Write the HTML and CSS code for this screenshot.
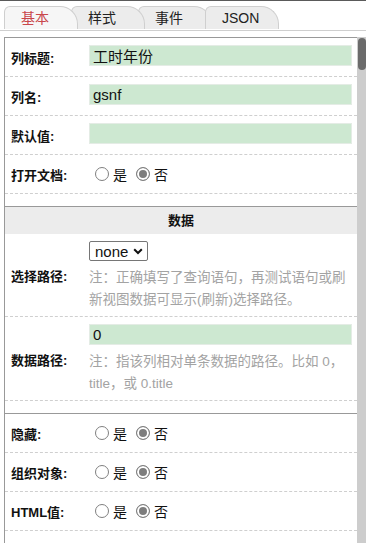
FILE: index.html
```html
<!DOCTYPE html>
<html>
  <head>
    <meta charset="UTF-8">
    <title>列属性</title>
    <link rel="stylesheet" href="styles.css">
  </head>
  <body>
    <div class="tabs">
      <div class="tab active">基本</div>
      <div class="tab">样式</div>
      <div class="tab">事件</div>
      <div class="tab">JSON</div>
    </div>
    <div class="main">
      <div class="panel">
        <div class="section">
          <div class="row">
            <label class="label">列标题:</label>
            <div class="value"><input class="text" type="text" value="工时年份"></div>
          </div>
          <div class="row">
            <label class="label">列名:</label>
            <div class="value"><input class="text" type="text" value="gsnf"></div>
          </div>
          <div class="row">
            <label class="label">默认值:</label>
            <div class="value"><input class="text" type="text" value=""></div>
          </div>
          <div class="row">
            <label class="label">打开文档:</label>
            <div class="value radios">
              <label><input type="radio" name="doc">是</label>
              <label><input type="radio" name="doc" checked>否</label>
            </div>
          </div>
        </div>

        <div class="group-head">数据</div>
        <div class="section">
          <div class="row tall">
            <label class="label">选择路径:</label>
            <div class="value">
              <div class="select">
                <span>none</span>
                <svg width="10" height="7" viewBox="0 0 10 7"><path d="M1.2 1.3 L5 5 L8.8 1.3" fill="none" stroke="#111" stroke-width="2"/></svg>
              </div>
              <p class="note">注：正确填写了查询语句，再测试语句或刷新视图数据可显示(刷新)选择路径。</p>
            </div>
          </div>
          <div class="row tall">
            <label class="label">数据路径:</label>
            <div class="value">
              <input class="text" type="text" value="0">
              <p class="note">注：指该列相对单条数据的路径。比如 0，title，或 0.title</p>
            </div>
          </div>
        </div>

        <div class="section ruled">
          <div class="row">
            <label class="label">隐藏:</label>
            <div class="value radios">
              <label><input type="radio" name="hide">是</label>
              <label><input type="radio" name="hide" checked>否</label>
            </div>
          </div>
          <div class="row">
            <label class="label">组织对象:</label>
            <div class="value radios">
              <label><input type="radio" name="obj">是</label>
              <label><input type="radio" name="obj" checked>否</label>
            </div>
          </div>
          <div class="row">
            <label class="label">HTML值:</label>
            <div class="value radios">
              <label><input type="radio" name="html">是</label>
              <label><input type="radio" name="html" checked>否</label>
            </div>
          </div>
        </div>

        <div class="footer">
          <svg width="15" height="15" viewBox="0 0 15 15"><circle cx="7.5" cy="7.5" r="6.5" fill="none" stroke="#666" stroke-width="1.2"/><path d="M7.5 4 V8" stroke="#666" stroke-width="1.4"/></svg>
          <span class="footer-title">显示脚本(S)</span>
          <svg width="10" height="10" viewBox="0 0 10 10"><rect x="0.5" y="0.5" width="9" height="9" fill="none" stroke="#666"/><rect x="0" y="0" width="10" height="3" fill="#666"/></svg>
        </div>
      </div>
      <div class="scrollbar"><div class="thumb"></div></div>
    </div>
  </body>
</html>
```

FILE: styles.css
```css
body {
  margin: 0;
  padding: 0;
  border-top: 1px solid #5a5a5a;
  background-color: #fff;
  font-family: "Liberation Sans", "Noto Sans CJK SC", sans-serif;
  color: #111;
  height: 542px;
  overflow: hidden;
}

.tabs {
  display: flex;
  padding: 5px 0 0 4px;
  border-bottom: 1px solid #cfcfcf;
  height: 24px;
}

.tab {
  position: relative;
  width: 74px;
  height: 23px;
  margin-right: -7px;
  box-sizing: border-box;
  border: 1px solid #cfcfcf;
  border-bottom: none;
  border-radius: 6px 18px 0 0;
  background-color: #ececec;
  font-size: 14px;
  line-height: 22px;
  padding-left: 16px;
  color: #222;
}

.tab.active {
  z-index: 2;
  background-color: #f6f6f6;
  color: #c9474b;
}

.tab:nth-child(2) { z-index: 1; }

.main {
  display: flex;
  margin-top: 6px;
  height: 506px;
  overflow: hidden;
}

.panel {
  flex: 1;
  margin-left: 4px;
  border-left: 1px solid #999;
  border-top: 1px solid #999;
  overflow: hidden;
}

.scrollbar {
  width: 9px;
  background-color: #cdcdcd;
}

.thumb {
  width: 8px;
  height: 32px;
  margin: 1px 0 0 1px;
  border-radius: 4px;
  background-color: #6b6b6b;
}

.section {
  padding-bottom: 12px;
}

.section.ruled {
  border-top: 1px solid #999;
}

.row {
  display: flex;
  align-items: center;
  min-height: 38px;
  padding: 0 5px 0 6px;
  border-bottom: 1px dashed #cfcfcf;
}

.row.tall {
  padding-top: 7px;
  padding-bottom: 6px;
}

.label {
  width: 78px;
  flex-shrink: 0;
  font-size: 13px;
  font-weight: bold;
}

.value {
  flex: 1;
}

.text {
  display: block;
  box-sizing: border-box;
  width: 100%;
  height: 21px;
  margin: 0 0 3px 0;
  padding: 0 3px;
  border: 1px solid #e4ece5;
  background-color: #cde8d1;
  font-family: "Liberation Sans", "Noto Sans CJK SC", sans-serif;
  font-size: 15px;
  color: #111;
  outline: none;
}

.row.tall .text {
  margin-bottom: 0;
}

.radios {
  display: flex;
  align-items: center;
  padding-left: 6px;
  font-size: 14px;
}

.radios label {
  display: flex;
  align-items: center;
  margin-right: 9px;
}

.radios input {
  -webkit-appearance: none;
  appearance: none;
  width: 14px;
  height: 14px;
  margin: 0 4px 0 0;
  border: 1px solid #808080;
  border-radius: 50%;
  background-color: #fff;
}

.radios input:checked {
  background-color: #7d7d7d;
  box-shadow: inset 0 0 0 2px #fff;
}

.select {
  display: inline-flex;
  align-items: center;
  gap: 5px;
  height: 20px;
  box-sizing: border-box;
  padding: 0 4px 0 5px;
  border: 1px solid #767676;
  border-radius: 2px;
  font-size: 15px;
}

.note {
  margin: 6px 0 0 0;
  font-size: 13.5px;
  line-height: 21.5px;
  color: #a3a3a3;
}

.group-head {
  height: 27px;
  line-height: 27px;
  border-top: 1px solid #999;
  background-color: #ececec;
  text-align: center;
  font-size: 13px;
  font-weight: bold;
}

.footer {
  display: flex;
  align-items: flex-start;
  padding: 4px 5px 0 8px;
  height: 30px;
  background-color: #dcdcdc;
}

.footer-title {
  flex: 1;
  text-align: center;
  font-size: 14px;
  line-height: 16px;
  color: #222;
  padding-left: 4px;
}

.footer svg:last-child {
  margin-top: 6px;
}
```
